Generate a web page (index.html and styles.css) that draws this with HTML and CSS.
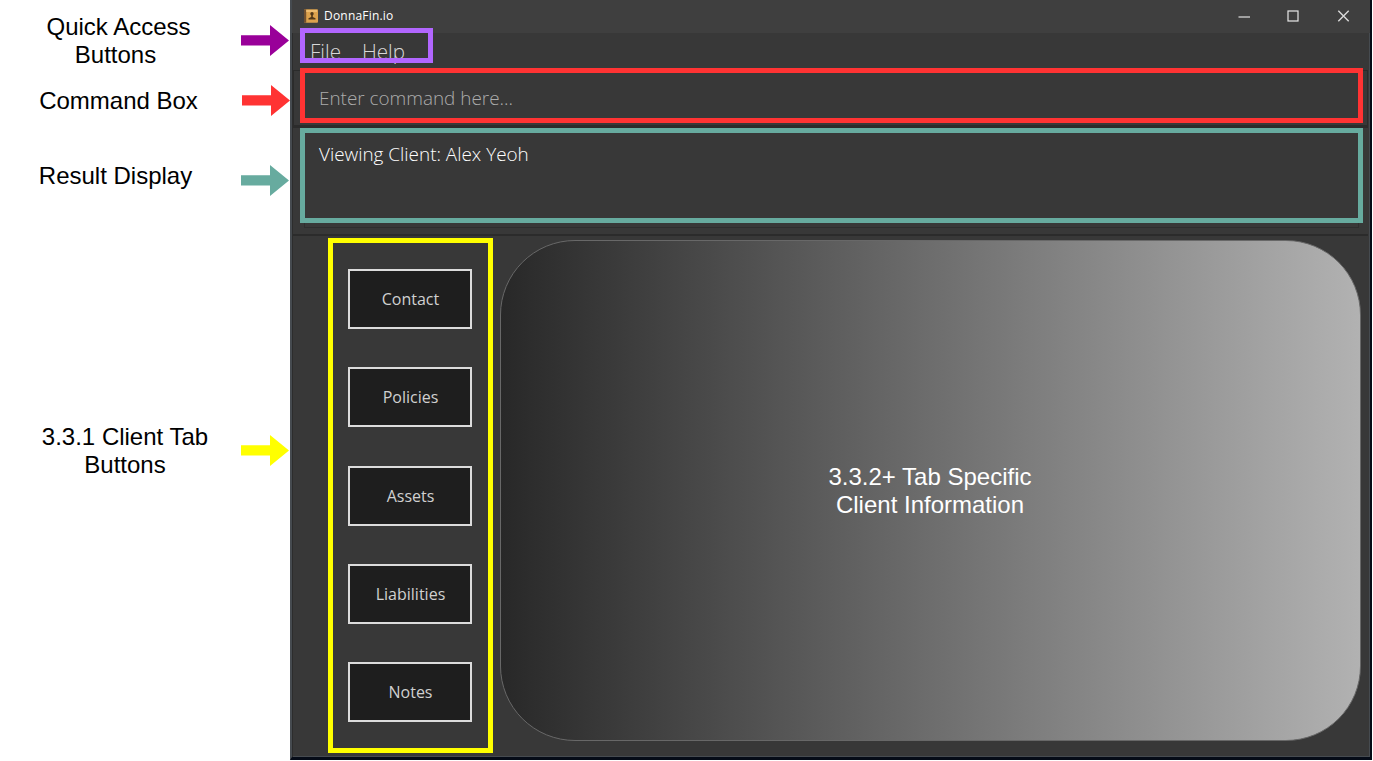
FILE: index.html
```html
<!DOCTYPE html>
<html lang="en">
<head>
<meta charset="utf-8">
<title>DonnaFin.io</title>
<link rel="stylesheet" href="styles.css">
</head>
<body>
<div class="page">
  <aside class="legend">
    <div class="note note-quick"><p><span class="t-quick">Quick Access</span><br><span class="t-quick2">Buttons</span></p>
      <svg class="arrow purple" viewBox="0 0 48 31"><path d="M0 10.3H29V0L48 15.5L29 31V20.5H0Z"/></svg></div>
    <div class="note note-command"><p>Command Box</p>
      <svg class="arrow red" viewBox="0 0 48 31"><path d="M0 10.3H29V0L48 15.5L29 31V20.5H0Z"/></svg></div>
    <div class="note note-result"><p>Result Display</p>
      <svg class="arrow teal" viewBox="0 0 48 31"><path d="M0 10.3H29V0L48 15.5L29 31V20.5H0Z"/></svg></div>
    <div class="note note-tabs"><p>3.3.1 Client Tab<br>Buttons</p>
      <svg class="arrow yellow" viewBox="0 0 48 31"><path d="M0 10.3H29V0L48 15.5L29 31V20.5H0Z"/></svg></div>
  </aside>
  <main class="window">
    <header class="titlebar">
      <svg class="app-icon" viewBox="0 0 14 14"><rect x="0" y=".3" width="14" height="13.4" rx="1" fill="#dca24d"/><rect x="0" y=".3" width="2.2" height="13.4" fill="#705030"/><path d="M2.2 1H13V3H2.2Z" fill="#edbc70"/><circle cx="8" cy="4.8" r="1.7" fill="#503719"/><path d="M7.2 6H8.8V8L11.5 9.3V10.5H4.5V9.3L7.2 8Z" fill="#503719"/></svg>
      <span class="app-name">DonnaFin.io</span>
      <svg class="controls" viewBox="0 0 114 14" fill="none"><path d="M.5 8H12" stroke="#b8b8b8" stroke-width="1.6"/><rect x="50" y="2" width="10" height="10" stroke="#e8e8e8" stroke-width="1.2"/><path d="M100.3 1.8L110.7 12.2M110.7 1.8L100.3 12.2" stroke="#dadada" stroke-width="1.4"/></svg>
    </header>
    <nav class="menu"><span>File</span><span>Help</span></nav>
    <section class="command"><span>Enter command here...</span></section>
    <section class="result"><div class="result-box"><span>Viewing Client: Alex Yeoh</span></div></section>
    <section class="content">
      <div class="tabs">
        <button class="tab">Contact</button>
        <button class="tab">Policies</button>
        <button class="tab">Assets</button>
        <button class="tab">Liabilities</button>
        <button class="tab">Notes</button>
      </div>
      <div class="panel"><p>3.3.2+ Tab Specific<br>Client Information</p></div>
    </section>
  </main>
  <div class="frame frame-quick"></div>
  <div class="frame frame-command"></div>
  <div class="frame frame-result"></div>
  <div class="frame frame-tabs"></div>
</div>
</body>
</html>
```
FILE: styles.css
```css
* { box-sizing: border-box; }
body { margin: 0; background: #fff; overflow: hidden; }
p { margin: 0; }
.page { position: relative; display: grid; grid-template-columns: 290px 1082px; width: 1373px; height: 760px; }

.legend { display: flex; flex-direction: column; font: 24px/28px "Liberation Sans", Arial, sans-serif; color: #000; }
.note { display: flex; align-items: flex-start; justify-content: space-between; flex: none; }
.note p { width: 237px; text-align: center; white-space: nowrap; }
.arrow { width: 48px; height: 31px; flex: none; margin-right: 1px; }
.note-quick { height: 84px; padding-top: 13px; }
.note-quick .arrow { margin-top: 12px; }
.note-command { height: 78px; padding-top: 3px; }
.note-command .arrow { margin: -2px 0 0; }
.note-result { height: 261px; }
.note-result .arrow { margin-top: 3px; }
.note-tabs .arrow { margin-top: 12px; }
.note-tabs p { padding-left: 13px; }
.note-result p { padding-right: 6px; }
.t-quick2 { margin-right: 6px; }
.purple { fill: #909; }
.red { fill: #f33; }
.teal { fill: #67ab9f; }
.yellow { fill: #ff0; }

.window { display: flex; flex-direction: column; height: 760px; background: #383838; border-left: 2px solid #464b50; border-right: 2px solid #050b17; border-bottom: 3px solid #050b17; box-shadow: inset 1px 0 #2c2c2c, inset -1px 0 #464b50, inset 0 -1px #464b50; font-family: "Open Sans", sans-serif; }
.titlebar { display: flex; align-items: center; height: 33px; flex: none; background: #3f3f3f; padding: 0 18px 2px 12px; color: #fff; }
.app-icon { width: 14px; height: 14px; }
.app-name { font: 12px/18px "Open Sans", sans-serif; letter-spacing: .2px; margin-left: 6px; }
.controls { width: 114px; height: 14px; margin-left: auto; }
.menu { display: flex; height: 37px; flex: none; padding: 3px 0 0 18px; gap: 21px; font-size: 20.6px; line-height: 30px; font-weight: 300; color: #d8d8d8; }
.command { height: 58px; flex: none; margin: 0 2px 0 1px; border: 1px solid #2b2b2b; border-bottom: 3px solid #2b2b2b; padding: 13px 0 0 25px; font-size: 18.9px; line-height: 28px; font-weight: 300; color: #acacac; }
.result { height: 108px; flex: none; margin: 0 2px 0 1px; border-bottom: 2px solid #2b2b2b; padding: 4px 9px 6px 11px; }
.result-box { height: 96px; border: 1px solid #2e2e2e; padding: 7px 14px; font-size: 18.9px; line-height: 28px; font-weight: 300; color: #fff; }
.content { display: flex; flex: 1; padding: 4px 9px 16px 56px; gap: 28px; min-height: 0; }
.tabs { display: flex; flex-direction: column; width: 124px; gap: 38.3px; padding-top: 29px; }
.tab { flex: none; width: 124px; height: 60px; border: 2px solid #dcdcdc; background: #1e1e1e; color: #d0d0d0; padding: 0 0 0 1px; font: 16px/22px "Open Sans", sans-serif; }
.panel { flex: 1; height: 501px; display: flex; align-items: center; justify-content: center; border: 1px solid #686868; border-radius: 75px; background: linear-gradient(90deg, #282828, #b2b2b2) border-box; color: #fff; font: 24px/28px "Liberation Sans", Arial, sans-serif; text-align: center; padding-right: 1px; }

/* Callout frames laid over the application window */
.frame { position: absolute; border: 5px solid; }
.frame-quick { left: 300px; top: 28px; width: 133px; height: 35px; border-color: #b266ff; }
.frame-command { left: 300px; top: 68px; width: 1063px; height: 55px; border-color: #f33; }
.frame-result { left: 300px; top: 128px; width: 1063px; height: 95px; border-color: #67ab9f; }
.frame-tabs { left: 328px; top: 238px; width: 165px; height: 515px; border-color: #ff0; }
```
